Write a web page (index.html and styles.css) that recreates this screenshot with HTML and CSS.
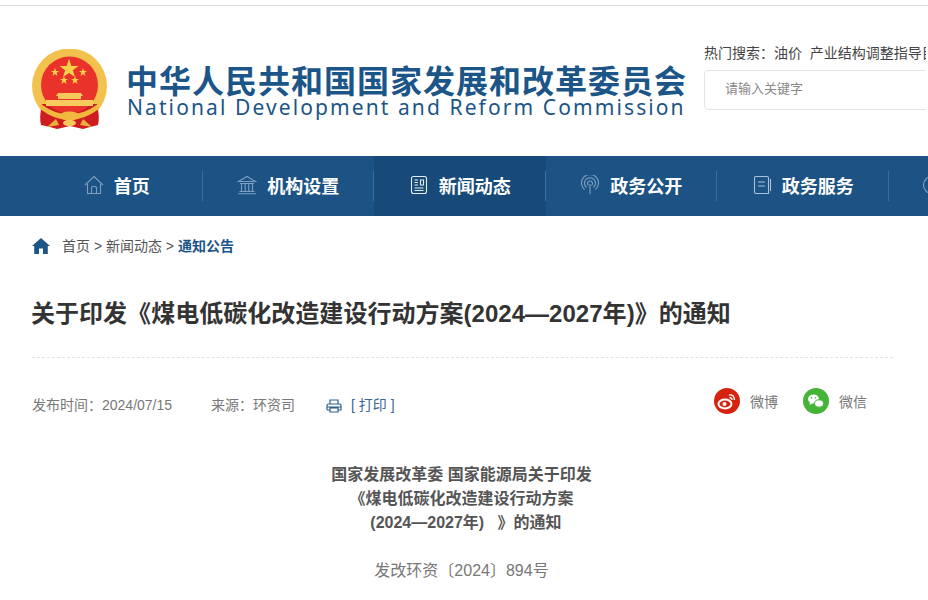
FILE: index.html
```html
<!DOCTYPE html>
<html lang="zh-CN">
<head>
    <meta charset="UTF-8">
    <meta name="viewport" content="width=device-width, initial-scale=1.0">
    <title>关于印发《煤电低碳化改造建设行动方案(2024—2027年)》的通知</title>
    <link rel="stylesheet" href="styles.css">
</head>
<body>
    <div class="top-line"></div>

    <header class="header">
        <svg class="emblem" viewBox="0 0 76 80">
            <circle cx="37.5" cy="37" r="37.500" fill="#f3c14d"/>
            <path d="M10 55 Q7 68 9 76 L18 78 L25 80 L38 77 L51 80 L58 78 L66 76 Q68 68 65 55 Z" fill="#cf1c20"/>
            <circle cx="37.5" cy="36" r="28.500" fill="#e8322a"/>
            <polygon points="37,10 39.400,17 46.500,17 40.800,21.300 43,28 37,24 31,28 33.200,21.300 27.500,17 34.600,17" fill="#f8d34a"/>
            <polygon points="23,19 24,22 27,22 24.600,23.800 25.500,27 23,25 20.500,27 21.400,23.800 19,22 22,22" fill="#f8d34a"/>
            <polygon points="51,19 52,22 55,22 52.600,23.800 53.500,27 51,25 48.500,27 49.400,23.800 47,22 50,22" fill="#f8d34a"/>
            <polygon points="32,27 33,30 36,30 33.600,31.800 34.500,35 32,33 29.500,35 30.400,31.800 28,30 31,30" fill="#f8d34a"/>
            <polygon points="43,27 44,30 47,30 44.600,31.800 45.500,35 43,33 40.500,35 41.400,31.800 39,30 42,30" fill="#f8d34a"/>
            <path d="M26 44 H49 L51 47 H49 V50 H26 V47 H24 Z" fill="#f5c85a"/>
            <rect x="14" y="51" width="47" height="6" fill="#f6cb5e"/>
            <path d="M9 55 Q37 76 66 55 L67 60 Q37 82 8 60 Z" fill="#f0b83c"/>
            <ellipse cx="37.500" cy="67" rx="10" ry="4.500" fill="#f0b83c"/>
            <path d="M24 70 L15 78 L27 76 Z M51 70 L60 78 L48 76 Z" fill="#eab03a"/>
            <ellipse cx="37.500" cy="74" rx="6.500" ry="3.200" fill="#f5c85a"/>
        </svg>
        <div class="brand">
            <div class="brand-cn">中华人民共和国国家发展和改革委员会</div>
            <div class="brand-en">National Development and Reform Commission</div>
        </div>
        <div class="search-area">
            <div class="hot-words">热门搜索：油价&nbsp;&nbsp;产业结构调整指导目</div>
            <div class="search-box">请输入关键字</div>
        </div>
    </header>

    <nav class="nav">
        <a class="nav-item">
            <svg class="nav-icon" viewBox="0 0 20 20"><path d="M1 10 L10 1.500 L19 10 M3.500 9 V18.500 H16.500 V9 M7.500 18.500 V12.500 Q10 10 12.500 12.500 V18.500"/></svg>
            首页
        </a>
        <a class="nav-item">
            <svg class="nav-icon" viewBox="0 0 20 20"><path d="M1.500 6.500 L10 1.500 L18.500 6.500 Z M3 8.500 H17 M4.500 9 V16 M8.200 9 V16 M11.800 9 V16 M15.500 9 V16 M2.500 16.500 H17.500 M1 18.800 H19"/></svg>
            机构设置
        </a>
        <a class="nav-item active">
            <svg class="nav-icon bright" viewBox="0 0 20 20"><rect x="2.500" y="1.500" width="15" height="17" rx="2"/><path d="M5.500 5 H9 M5.500 7.500 H9 M5.500 10 H9 M11.500 5 H14.500 V10 H11.500 Z M5.500 13 H14.500 M5.500 15.500 H14.500"/></svg>
            新闻动态
        </a>
        <a class="nav-item">
            <svg class="nav-icon" viewBox="0 0 20 20"><path d="M4.500 14.500 A8.500 8.500 0 1 1 15.500 14.500 M6.500 12.500 A5.500 5.500 0 1 1 13.500 12.500 M8.500 10.500 A2.500 2.500 0 1 1 11.500 10.500 M10 9 V19"/></svg>
            政务公开
        </a>
        <a class="nav-item">
            <svg class="nav-icon bright-soft" viewBox="0 0 20 20"><path d="M4 1.500 H15 Q16.500 1.500 16.500 3 V18.500 H4 Q2.500 18.500 2.500 17 V3 Q2.500 1.500 4 1.500 Z M6 7 H13 M6 11 H13 M18.500 4 V16"/></svg>
            政务服务
        </a>
        <a class="nav-item nav-last">
            <svg class="nav-icon" viewBox="0 0 20 20"><circle cx="10" cy="10" r="8.500"/></svg>
        </a>
    </nav>

    <main class="content">
        <div class="crumbs">
            <svg class="crumb-home" viewBox="0 0 18 16"><path d="M9 0 L18 8 L15.800 8 V16 H11 V10.500 H7 V16 H2.200 V8 L0 8 Z"/></svg>
            <span>首页 &gt; 新闻动态 &gt; <b>通知公告</b></span>
        </div>

        <h1 class="title">关于印发《煤电低碳化改造建设行动方案(2024—2027年)》的通知</h1>

        <div class="meta">
            <span class="meta-date">发布时间：2024/07/15</span>
            <span class="meta-source">来源：环资司</span>
            <span class="print">
                <svg class="print-icon" viewBox="0 0 16 14"><path d="M4 5 V1 H12 V5 M1 11 V6.500 Q1 5 2.500 5 H13.500 Q15 5 15 6.500 V11 H12 M4 11 H1 M4 9 H12 V13 H4 Z M1 8 H15"/></svg>
                [ 打印 ]
            </span>
            <div class="share">
                <span class="share-item">
                    <svg class="share-icon" viewBox="0 0 26 26">
                        <circle cx="13" cy="13" r="13" fill="#d5230f"/>
                        <ellipse cx="11" cy="16" rx="6.500" ry="4.500" fill="none" stroke="#fff" stroke-width="2"/>
                        <circle cx="10.500" cy="16" r="2" fill="#fff"/>
                        <path d="M15 7 Q20 6 20.500 12 M15.500 9.800 Q18 9.500 18 12" fill="none" stroke="#fff" stroke-width="1.400"/>
                    </svg>
                    微博
                </span>
                <span class="share-item">
                    <svg class="share-icon" viewBox="0 0 26 26">
                        <circle cx="13" cy="13" r="13" fill="#43b436"/>
                        <ellipse cx="10.500" cy="11" rx="5.500" ry="4.500" fill="#fff"/>
                        <path d="M7 14 L6.500 17 L10 15 Z" fill="#fff"/>
                        <ellipse cx="16" cy="15.500" rx="4.500" ry="3.700" fill="#fff" stroke="#43b436"/>
                        <circle cx="8.600" cy="9.800" r=".8" fill="#43b436"/>
                        <circle cx="12.400" cy="9.800" r=".8" fill="#43b436"/>
                    </svg>
                    微信
                </span>
            </div>
        </div>

        <div class="article">
            <p class="article-head">国家发展改革委 国家能源局关于印发<br>《煤电低碳化改造建设行动方案<br>&nbsp;&nbsp;(2024—2027年)&nbsp;&nbsp;&nbsp;》的通知</p>
            <p class="doc-no">发改环资〔2024〕894号</p>
        </div>
    </main>
</body>
</html>
```

FILE: styles.css
```css
* {
    box-sizing: border-box;
}
html, body {
    overflow: hidden;
}
body {
    margin: 0;
    width: 928px;
    height: 600px;
    background-color: #fff;
    font-family: "Liberation Sans", "Noto Sans CJK SC", sans-serif;
    color: #666;
}
.top-line {
    height: 6px;
    border-bottom: 1px solid #dedede;
}

/* header */
.header {
    display: flex;
    height: 150px;
    padding: 37px 0 0 32px;
}
.emblem {
    width: 76px;
    height: 80px;
    margin-top: 6px;
    flex: none;
}
.brand {
    width: 560px;
    margin: 20px 0 0 18px;
    flex: none;
    color: #1c5587;
    font-family: "Noto Sans CJK SC", sans-serif;
}
.brand-cn {
    font-size: 32px;
    font-weight: 700;
    line-height: 32px;
    letter-spacing: 1px;
    white-space: nowrap;
}
.brand-en {
    margin: 1px 0 0 1px;
    font-family: "Noto Sans", sans-serif;
    font-size: 21px;
    line-height: 22px;
    letter-spacing: 2.1px;
    white-space: nowrap;
}
.search-area {
    width: 222px;
    margin-left: 18px;
    flex: none;
    overflow: hidden;
}
.hot-words {
    font-size: 14px;
    line-height: 20px;
    color: #444;
    white-space: nowrap;
}
.search-box {
    width: 300px;
    height: 40px;
    margin-top: 7px;
    padding-left: 20px;
    border: 1px solid #e4e4e4;
    border-radius: 4px;
    font-size: 13px;
    line-height: 36px;
    color: #888;
}

/* nav */
.nav {
    display: flex;
    height: 60px;
    padding-left: 31px;
    background-color: #1c5384;
    white-space: nowrap;
    overflow: hidden;
}
.nav-item {
    position: relative;
    display: flex;
    align-items: center;
    justify-content: center;
    gap: 10px;
    width: 171.5px;
    padding-bottom: 2px;
    flex: none;
    font-family: "Noto Sans CJK SC", sans-serif;
    font-size: 18px;
    font-weight: 700;
    color: #fff;
}
.nav-item::after {
    content: "";
    position: absolute;
    right: 0;
    top: 15px;
    height: 30px;
    width: 1px;
    background-color: #3d6e9b;
}
.nav-item.active {
    background-color: #174a78;
}
.nav-item.nav-last {
    justify-content: flex-start;
    width: 40px;
    padding-left: 33px;
}
.nav-last::after {
    display: none;
}
.nav-icon {
    width: 20px;
    height: 20px;
    flex: none;
    fill: none;
    stroke: #7d9fc0;
    stroke-width: 1.1;
}
.nav-icon.bright {
    stroke: #e4edf5;
}
.nav-icon.bright-soft {
    stroke: #a9c2da;
}

/* content */
.content {
    padding: 0 35px 0 32px;
}
.crumbs {
    display: flex;
    align-items: center;
    gap: 12px;
    height: 20px;
    margin-top: 20px;
    font-size: 14px;
    line-height: 16px;
    color: #555;
}
.crumbs b {
    color: #1c5587;
}
.crumb-home {
    width: 18px;
    height: 16px;
    fill: #1c5587;
}
.title {
    margin: 0;
    padding: 40px 0 26px;
    height: 102px;
    border-bottom: 1px dashed #e3e3e3;
    font-size: 24px;
    line-height: 36px;
    font-weight: 700;
    letter-spacing: .03px;
    color: #333;
    white-space: nowrap;
    text-indent: -1px;
}
.meta {
    display: flex;
    align-items: center;
    height: 46px;
    margin-top: 23px;
    font-size: 14px;
    color: #777;
}
.meta-date {
    width: 179px;
}
.meta-source {
    width: 115px;
}
.print {
    display: flex;
    align-items: center;
    gap: 9px;
    color: #3b6591;
}
.print-icon {
    width: 16px;
    height: 14px;
    margin-top: 3px;
    fill: none;
    stroke: #2f5f8e;
    stroke-width: 1.2;
}
.share {
    display: flex;
    gap: 25px;
    margin-left: auto;
    margin-right: 26px;
    margin-top: -6px;
}
.share-item {
    display: flex;
    align-items: center;
    gap: 10px;
}
.share-icon {
    width: 26px;
    height: 26px;
}
.article {
    padding-right: 2px;
    margin-top: 36px;
    text-align: center;
    font-size: 16px;
    line-height: 24px;
}
.article p {
    margin: 0;
}
.article-head {
    font-weight: 700;
    color: #555;
}
.doc-no {
    padding-top: 24px;
    color: #777;
}
```
